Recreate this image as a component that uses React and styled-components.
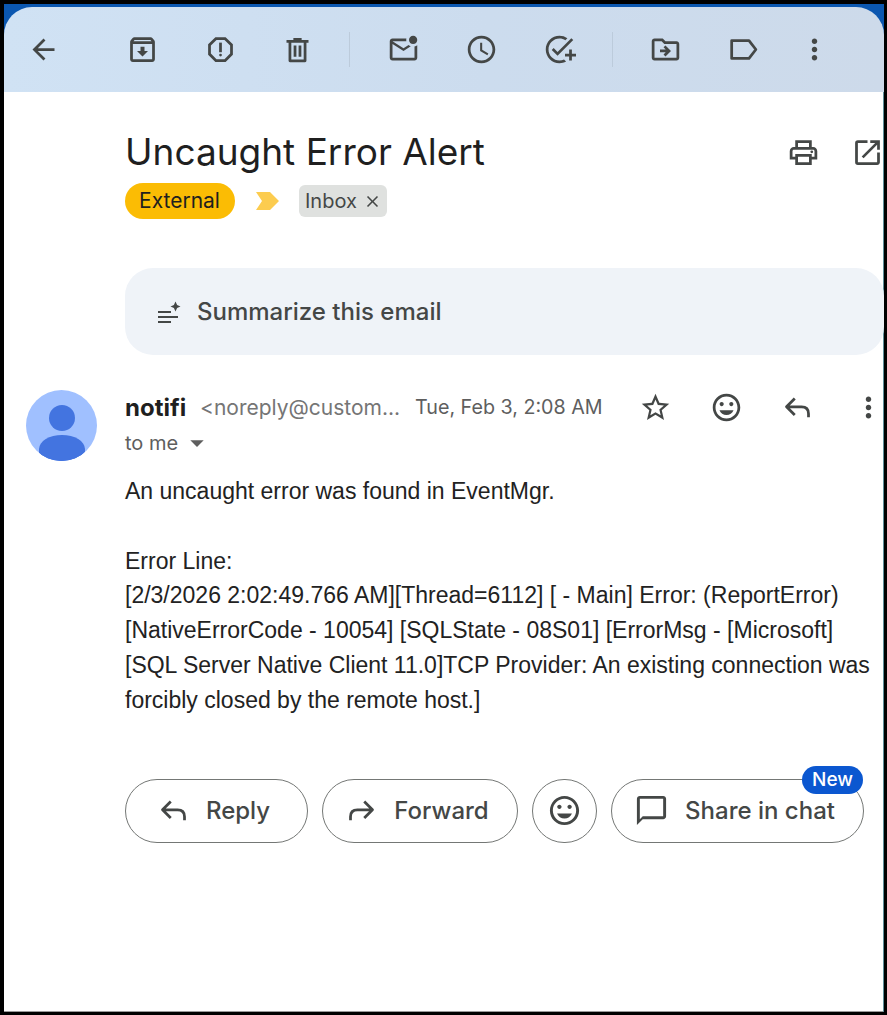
import React from "react";
import styled, { createGlobalStyle } from "styled-components";
import {
  MdArrowBack,
  MdOutlineArchive,
  MdOutlineReport,
  MdOutlineMarkEmailUnread,
  MdOutlineSchedule,
  MdOutlineAddTask,
  MdOutlineDriveFileMove,
  MdMoreVert,
  MdOutlinePrint,
  MdOpenInNew,
  MdStarBorder,
  MdOutlineInsertEmoticon,
  MdClose,
  MdArrowDropDown,
  MdOutlineChatBubbleOutline,
} from "react-icons/md";

const GlobalStyle = createGlobalStyle`
  html, body {
    margin: 0;
    padding: 0;
    background: #000;
  }
`;

const Frame = styled.div`
  box-sizing: border-box;
  height: 1015px;
  width: 887px;
  border-style: solid;
  border-color: #000;
  border-width: 4px 3px 3px 4px;
  background: #fff;
  box-shadow: inset -1px 0 #5f8f9a, inset 0 -1px #9a9a9a;
  overflow: hidden;
  font-family: Inter, "Liberation Sans", sans-serif;
  color: #444746;
`;

const TopStrip = styled.div`
  background: #0b57b0;
  padding-top: 3px;
`;

const Toolbar = styled.div`
  display: flex;
  align-items: center;
  height: 85px;
  border-radius: 28px 28px 0 0;
  background: linear-gradient(90deg, #d0e2f4 0%, #ccdcee 55%, #cddaea 100%);
  color: #444746;
`;

const ToolButton = styled.div`
  flex: none;
  display: flex;
  align-items: center;
  justify-content: center;
  width: ${(p) => p.$w || 78}px;
  margin-right: ${(p) => p.$after || 0}px;
  font-size: 33px;
`;

const ToolDivider = styled.div`
  flex: none;
  width: 1px;
  height: 35px;
  margin: 0 ${(p) => p.$right || 13}px 0 14px;
  background: #bccbdb;
`;

const TitleRow = styled.div`
  display: flex;
  align-items: center;
  height: 46px;
  margin: 37px -15px 0 0;
  padding-left: 121px;
`;

const Title = styled.h1`
  flex: 1;
  margin: 0 0 2px;
  font-size: 37px;
  font-weight: 400;
  color: #1f1f1f;
  white-space: nowrap;
`;

const TitleAction = styled.div`
  flex: none;
  display: flex;
  align-items: center;
  justify-content: center;
  width: 64px;
  font-size: 33px;
`;

const LabelRow = styled.div`
  display: flex;
  align-items: center;
  height: 36px;
  margin-top: 8px;
  padding-left: 121px;
`;

const ExternalPill = styled.span`
  box-sizing: border-box;
  display: flex;
  align-items: center;
  justify-content: center;
  width: 110px;
  height: 36px;
  padding: 0 1px 1px 0;
  border-radius: 18px;
  background: #fbbc04;
  color: #1f1f1f;
  font-size: 21px;
`;

const Marker = styled.svg`
  flex: none;
  width: 23px;
  height: 18px;
  margin: 0 20px 0 21px;
`;

const InboxChip = styled.span`
  display: flex;
  align-items: center;
  height: 32px;
  width: 88px;
  box-sizing: border-box;
  padding-left: 6px;
  border-radius: 6px;
  background: #dfe1df;
  color: #444746;
  font-size: 20px;

  svg {
    font-size: 19px;
    margin-left: 6px;
  }
`;

const SummaryBar = styled.div`
  display: flex;
  align-items: center;
  gap: 16px;
  height: 87px;
  margin: 49px 0 0 121px;
  padding-left: 32px;
  border-radius: 28px;
  background: #eff3f8;
  font-size: 24px;
  font-weight: 500;
`;

const SparkIcon = styled.svg`
  flex: none;
  width: 24px;
  height: 24px;
`;

const MessageHeader = styled.div`
  display: flex;
  margin: 35px 0 0 22px;
`;

const Avatar = styled.svg`
  flex: none;
  width: 71px;
  height: 71px;
  margin-right: 28px;
`;

const HeaderBody = styled.div`
  flex: 1;
  min-width: 0;
`;

const SenderRow = styled.div`
  display: flex;
  align-items: center;
  height: 34px;
`;

const SenderName = styled.span`
  flex: none;
  width: 75px;
  font-size: 24px;
  font-weight: 700;
  color: #1f1f1f;
`;

const SenderMail = styled.span`
  flex: none;
  width: 215px;
  font-size: 21px;
  color: #757575;
  white-space: nowrap;
`;

const SentAt = styled.span`
  flex: none;
  width: 205px;
  font-size: 19.700px;
  color: #5e5e5e;
  white-space: nowrap;
`;

const HeaderActions = styled.div`
  display: flex;
`;

const HeaderAction = styled.div`
  flex: none;
  display: flex;
  align-items: center;
  justify-content: center;
  width: 71px;
  font-size: 33px;
`;

const ToMe = styled.div`
  display: flex;
  align-items: center;
  height: 38px;
  font-size: 20px;
  color: #5e5e5e;

  svg {
    font-size: 32px;
    margin-left: 3px;
  }
`;

const Body = styled.div`
  margin: 12px 0 0 121px;
  font-family: "Liberation Sans", Arial, sans-serif;
  font-size: 23px;
  line-height: 34.800px;
  color: #222;
  white-space: nowrap;
`;

const ButtonRow = styled.div`
  display: flex;
  gap: 14px;
  margin: 61px 0 0 121px;
`;

const ActionButton = styled.div`
  position: relative;
  box-sizing: border-box;
  flex: none;
  display: flex;
  align-items: center;
  justify-content: center;
  gap: 16px;
  width: ${(p) => p.$w}px;
  height: 64px;
  padding-right: ${(p) => p.$shift || 0}px;
  border: 1px solid #747775;
  border-radius: 32px;
  font-size: 24px;
  font-weight: 500;
  color: #444746;
`;

const NewBadge = styled.span`
  position: absolute;
  top: -14px;
  right: 0;
  display: flex;
  align-items: center;
  justify-content: center;
  width: 61px;
  height: 28px;
  border-radius: 14px;
  background: #0b57d0;
  color: #fff;
  font-size: 19px;
  font-weight: 500;
`;

const LineIcon = styled.svg`
  flex: none;
  width: ${(p) => p.$size || 33}px;
  height: ${(p) => p.$size || 33}px;
  fill: none;
  stroke: currentColor;
  stroke-width: 2;
  stroke-linejoin: round;
`;

const TrashIcon = () => (
  <LineIcon viewBox="0 0 24 24">
    <path d="M4 6h16M9 4.600h6M6.500 6v14.200h11V6M10.200 9v8.200M13.800 9v8.200" />
  </LineIcon>
);

const LabelIcon = () => (
  <LineIcon viewBox="0 0 24 24">
    <path d="M3.400 5.500H16l5 6.500-5 6.500H3.400z" />
  </LineIcon>
);

const ReplyIcon = ({ size }) => (
  <LineIcon $size={size} viewBox="0 0 24 24">
    <path d="M10 5.500 4 11.500l6 6M4 11.500h11q5 0 5 5V19" />
  </LineIcon>
);

const ForwardIcon = ({ size }) => (
  <LineIcon $size={size} viewBox="0 0 24 24">
    <path d="M14 5.500l6 6-6 6M20 11.500H9q-5 0-5 5V19" />
  </LineIcon>
);

export default function App() {
  return (
    <>
      <GlobalStyle />
      <Frame>
        <TopStrip>
          <Toolbar>
            <ToolButton $after={21}>
              <MdArrowBack />
            </ToolButton>
            <ToolButton>
              <MdOutlineArchive />
            </ToolButton>
            <ToolButton>
              <MdOutlineReport />
            </ToolButton>
            <ToolButton $w={76}>
              <TrashIcon />
            </ToolButton>
            <ToolDivider $right={14} />
            <ToolButton>
              <MdOutlineMarkEmailUnread />
            </ToolButton>
            <ToolButton>
              <MdOutlineSchedule />
            </ToolButton>
            <ToolButton>
              <MdOutlineAddTask />
            </ToolButton>
            <ToolDivider />
            <ToolButton>
              <MdOutlineDriveFileMove />
            </ToolButton>
            <ToolButton>
              <LabelIcon />
            </ToolButton>
            <ToolButton $w={64}>
              <MdMoreVert />
            </ToolButton>
          </Toolbar>
        </TopStrip>

        <TitleRow>
          <Title>Uncaught Error Alert</Title>
          <TitleAction>
            <MdOutlinePrint />
          </TitleAction>
          <TitleAction>
            <MdOpenInNew />
          </TitleAction>
        </TitleRow>

        <LabelRow>
          <ExternalPill>External</ExternalPill>
          <Marker viewBox="0 0 23 18">
            <path d="M0 0h14l9 9-9 9H0l6-9z" fill="#fccc4f" />
          </Marker>
          <InboxChip>
            Inbox
            <MdClose />
          </InboxChip>
        </LabelRow>

        <SummaryBar>
          <SparkIcon viewBox="0 0 24 24" fill="#444746">
            <path d="M1 11h13v2H1zM1 16h20v2H1zM1 21h13v2H1z" />
            <path d="M18.500 1.500l1.600 3.400 3.400 1.600-3.400 1.600-1.600 3.400-1.600-3.400-3.400-1.600 3.400-1.600z" />
          </SparkIcon>
          Summarize this email
        </SummaryBar>

        <MessageHeader>
          <Avatar viewBox="0 0 71 71">
            <defs>
              <clipPath id="avatarClip">
                <circle cx="35.500" cy="35.500" r="35.500" />
              </clipPath>
            </defs>
            <circle cx="35.500" cy="35.500" r="35.500" fill="#a0c0ff" />
            <g clipPath="url(#avatarClip)" fill="#4374e0">
              <circle cx="36" cy="28" r="13" />
              <ellipse cx="36" cy="59" rx="23" ry="14" />
              <rect x="13" y="59" width="46" height="14" />
            </g>
          </Avatar>
          <HeaderBody>
            <SenderRow>
              <SenderName>notifi</SenderName>
              <SenderMail>&lt;noreply@custom...</SenderMail>
              <SentAt>Tue, Feb 3, 2:08 AM</SentAt>
              <HeaderActions>
                <HeaderAction>
                  <MdStarBorder />
                </HeaderAction>
                <HeaderAction>
                  <MdOutlineInsertEmoticon />
                </HeaderAction>
                <HeaderAction>
                  <ReplyIcon />
                </HeaderAction>
                <HeaderAction>
                  <MdMoreVert />
                </HeaderAction>
              </HeaderActions>
            </SenderRow>
            <ToMe>
              to me
              <MdArrowDropDown />
            </ToMe>
          </HeaderBody>
        </MessageHeader>

        <Body>
          An uncaught error was found in EventMgr.
          <br />
          <br />
          Error Line:
          <br />
          [2/3/2026 2:02:49.766 AM][Thread=6112] [ - Main] Error: (ReportError)
          <br />
          [NativeErrorCode - 10054] [SQLState - 08S01] [ErrorMsg - [Microsoft]
          <br />
          [SQL Server Native Client 11.0]TCP Provider: An existing connection was
          <br />
          forcibly closed by the remote host.]
        </Body>

        <ButtonRow>
          <ActionButton $w={183} $shift={6}>
            <ReplyIcon />
            Reply
          </ActionButton>
          <ActionButton $w={196} $shift={6}>
            <ForwardIcon />
            Forward
          </ActionButton>
          <ActionButton $w={65}>
            <MdOutlineInsertEmoticon size={35} />
          </ActionButton>
          <ActionButton $w={253} $shift={6}>
            <MdOutlineChatBubbleOutline size={35} />
            Share in chat
            <NewBadge>New</NewBadge>
          </ActionButton>
        </ButtonRow>
      </Frame>
    </>
  );
}
